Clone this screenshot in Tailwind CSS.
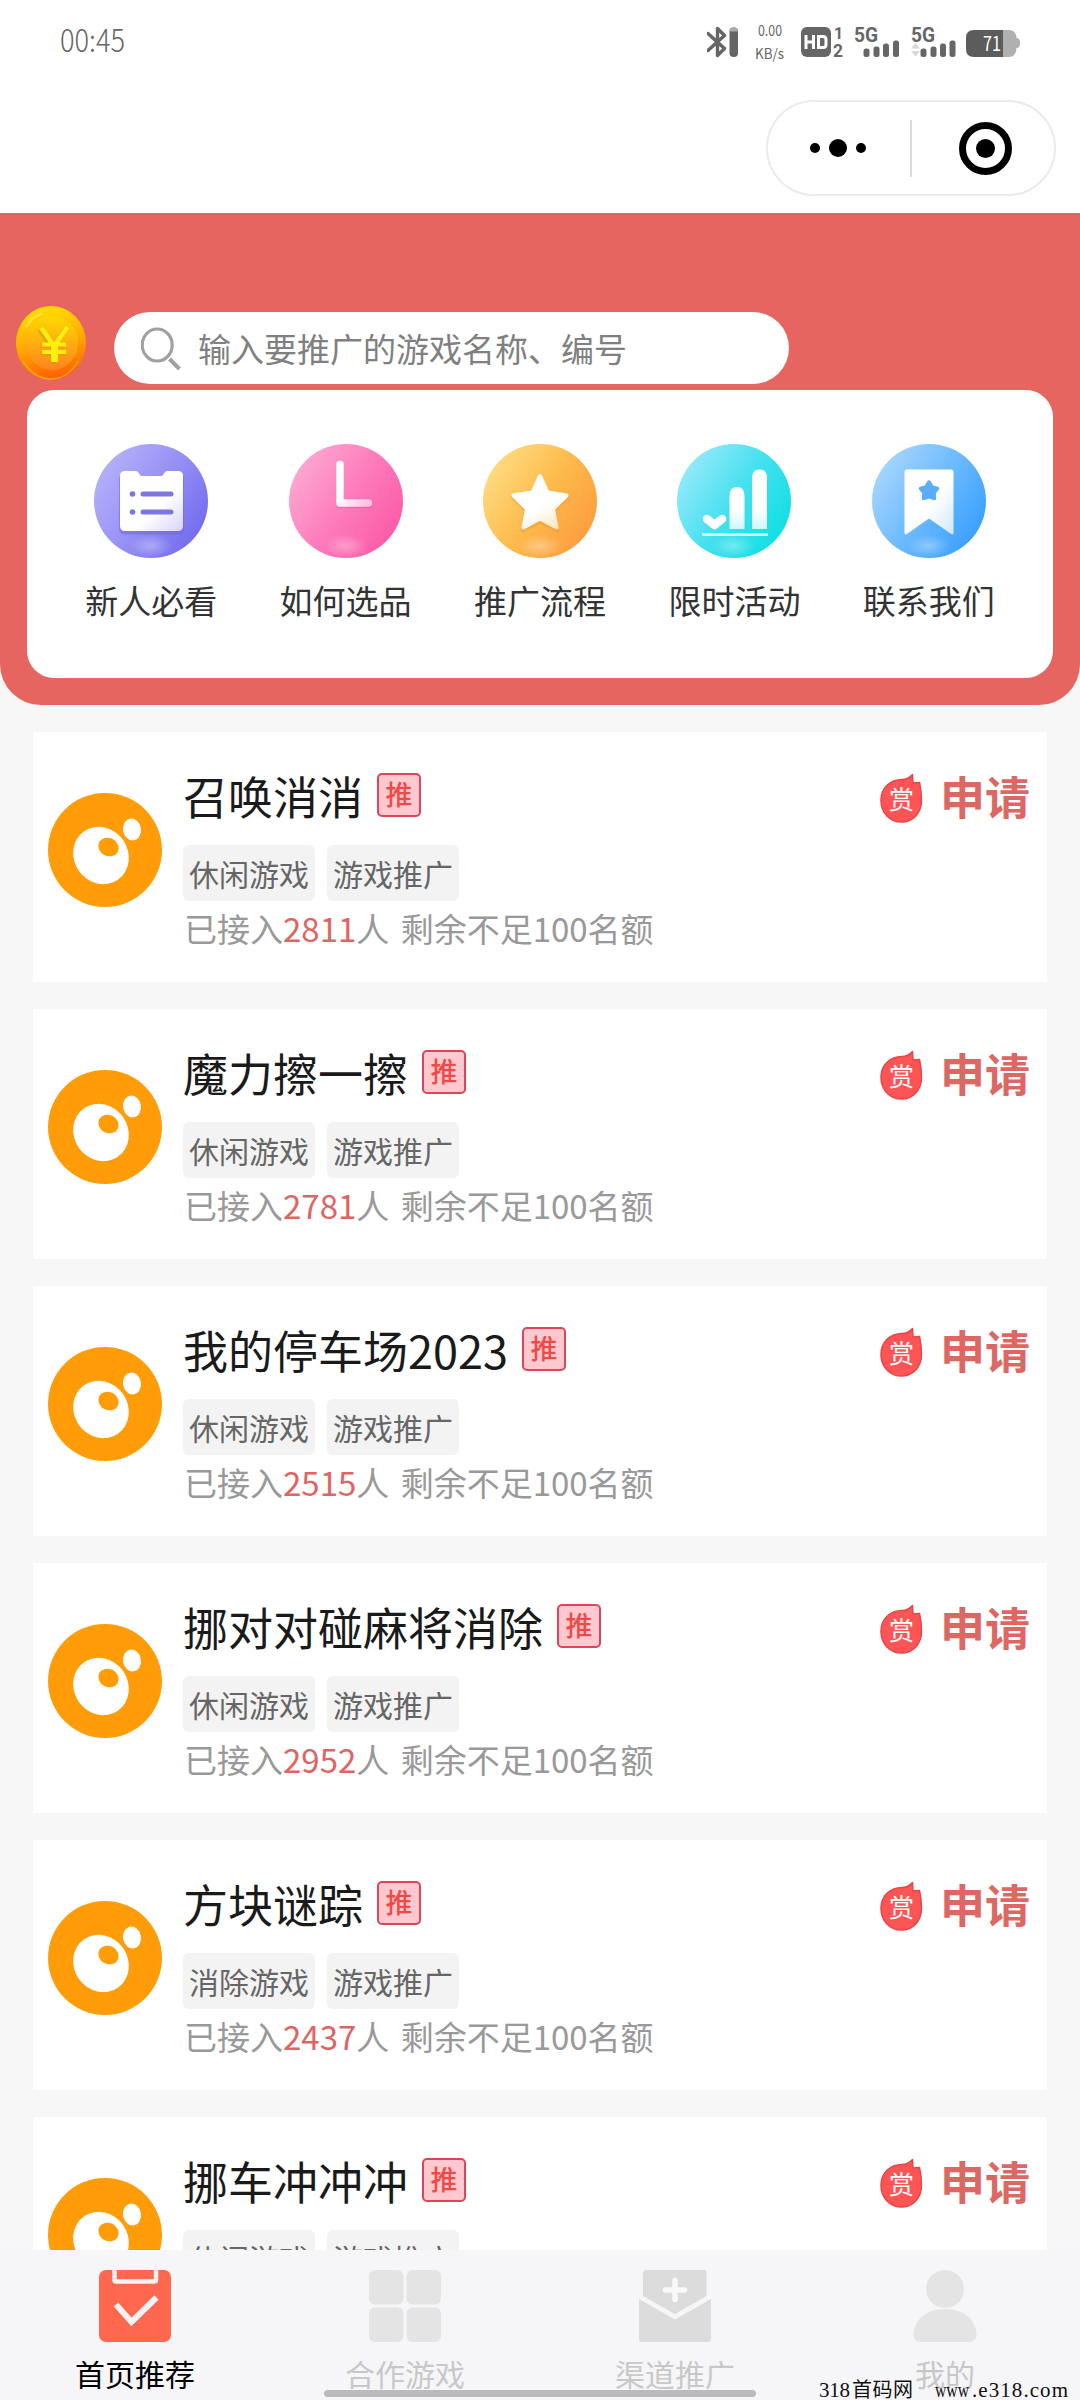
<!DOCTYPE html>
<html lang="zh-CN">
<head>
<meta charset="utf-8">
<title>首页推荐</title>
<script src="https://cdn.jsdelivr.net/npm/@tailwindcss/browser@4"></script>
</head>
<body class="bg-white">
<div class="relative flex h-[2400px] w-[1080px] flex-col overflow-hidden bg-[#f7f7f7] font-['Noto_Sans_CJK_SC','Noto_Sans',sans-serif] font-normal">

  <!-- status bar and capsule -->
  <header class="flex h-[213px] shrink-0 flex-col bg-white">
    <div class="flex h-[82px] items-start pl-[60px] pr-[60px] pt-[20px]">
      <svg width="68" height="44" viewBox="0 -5 68 44"><text x="0" y="26.500" font-size="31" fill="#666" textLength="65" lengthAdjust="spacingAndGlyphs" font-family="'Noto Sans CJK SC',sans-serif" font-weight="300">00:45</text></svg>
      <div class="ml-auto flex items-start">
        <svg width="32" height="44" viewBox="0 -5 32 44"><path d="M1 8.500 17.500 23.500 10.500 30.500V3.500L17.500 10.500 1 25.500" fill="none" stroke="#666" stroke-width="3.400" stroke-linejoin="round" stroke-linecap="round"/><rect x="22.500" y="2.500" width="8.500" height="29.500" rx="4" fill="#666"/><path d="M22.500 6.500a4.200 4.200 0 0 1 8.500 0z" fill="#aaa"/></svg>
        <svg class="ml-[14px]" width="34" height="50" viewBox="0 -5 34 50"><g fill="#666" font-family="'Noto Sans CJK SC',sans-serif"><text x="5" y="11" font-size="15" textLength="24" lengthAdjust="spacingAndGlyphs">0.00</text><text x="2" y="34" font-size="14" textLength="29" lengthAdjust="spacingAndGlyphs">KB/s</text></g></svg>
        <svg class="ml-[14px]" width="44" height="44" viewBox="0 -5 44 44"><rect x="0" y="2" width="30" height="30" rx="6" fill="#666"/><path d="M5 10V24M12.500 10V24M5 17H12.500" stroke="#fff" stroke-width="3" fill="none"/><path d="M17.500 11.500H22Q25 11.500 25 14.500V19.500Q25 22.500 22 22.500H17.500Z" stroke="#fff" stroke-width="3" fill="none"/><g fill="#666" font-weight="700" font-family="Roboto,sans-serif"><text x="33" y="13.500" font-size="16">1</text><text x="32" y="31.500" font-size="17.500">2</text></g></svg>
        <svg class="ml-[9px]" width="46" height="44" viewBox="0 -5 46 44"><text x="0" y="16.500" font-size="20" font-weight="700" fill="#666" textLength="24" lengthAdjust="spacingAndGlyphs" font-family="Roboto,sans-serif">5G</text><g fill="#666"><rect x="9.500" y="23.500" width="6" height="8.500" rx="2.500"/><rect x="19.500" y="21.500" width="6" height="10.500" rx="2.500"/><rect x="29" y="18.500" width="6" height="13.500" rx="2.500"/><rect x="39" y="15.500" width="6" height="16.500" rx="2.500"/></g></svg>
        <svg class="ml-[11px]" width="46" height="44" viewBox="0 -5 46 44"><text x="0" y="16.500" font-size="20" font-weight="700" fill="#666" textLength="24" lengthAdjust="spacingAndGlyphs" font-family="Roboto,sans-serif">5G</text><path d="M0 23.500 4.500 18 9 23.500zM0 26 4.500 31.500 9 26z" fill="#d8d8d8"/><g fill="#666"><rect x="9.500" y="23.500" width="6" height="8.500" rx="2.500"/><rect x="19.500" y="21.500" width="6" height="10.500" rx="2.500"/><rect x="29" y="18.500" width="6" height="13.500" rx="2.500"/><rect x="38.500" y="15.500" width="6" height="16.500" rx="2.500"/></g></svg>
        <svg class="ml-[9px]" width="54" height="44" viewBox="0 -5 54 44"><path d="M37 5h6q7 0 7.500 8q3.500 0 3.500 5t-3.500 5q-.5 9-7.500 9h-6z" fill="#b0b0b0"/><path d="M37 5H8Q0 5 0 13V24Q0 32 8 32H37Z" fill="#5c5c5c"/><text x="17" y="25.500" font-size="20" fill="#fff" textLength="18" lengthAdjust="spacingAndGlyphs" font-family="'Noto Sans CJK SC',sans-serif">71</text></svg>
      </div>
    </div>
    <div class="mt-[18px] flex justify-end pr-[24px]">
      <div class="flex h-[96px] w-[290px] items-center rounded-full border-2 border-[#ebebeb]">
        <div class="flex w-[142px] items-center justify-center gap-[9px] pr-[3px]">
          <i class="size-[10px] rounded-full bg-black"></i><i class="size-[18px] rounded-full bg-black"></i><i class="size-[10px] rounded-full bg-black"></i>
        </div>
        <i class="h-[57px] w-[2px] bg-[#dcdcdc]"></i>
        <div class="flex flex-1 justify-center pl-[5px]">
          <div class="flex size-[53px] items-center justify-center rounded-full border-[7px] border-black"><i class="size-[19px] rounded-full bg-black"></i></div>
        </div>
      </div>
    </div>
  </header>

  <!-- search and shortcuts -->
  <section class="flex h-[492px] shrink-0 flex-col rounded-b-[41px] bg-[#e66560]">
    <div class="flex h-[177px] items-start pl-[16px] pt-[93px]">
      <svg width="70" height="74" viewBox="0 0 70 74">
        <defs><linearGradient id="c1" x1=".4" y1="0" x2=".6" y2="1"><stop offset="0" stop-color="#ffe000"/><stop offset=".5" stop-color="#ffa800"/><stop offset="1" stop-color="#ff5a00"/></linearGradient><linearGradient id="c2" x1="0" y1="0" x2="0" y2="1"><stop offset="0" stop-color="#ffd800"/><stop offset="1" stop-color="#ff8420"/></linearGradient></defs>
        <ellipse cx="35" cy="37" rx="35" ry="37" fill="url(#c1)"/>
        <path d="M7 55Q18 73 35 73T62 55" fill="none" stroke="#ffa51c" stroke-width="1.500"/>
        <ellipse cx="36" cy="37" rx="26" ry="27" fill="url(#c2)"/>
        <path d="M11 20Q16 11 25 8" fill="none" stroke="#ffe040" stroke-width="2.500" stroke-linecap="round"/>
        <path d="M24.500 23 37.500 41 51 22M38 40V57M26 38.500H50M26 46.500H50" fill="none" stroke="#d98a10" stroke-width="4.500" opacity=".5" transform="translate(-1.200 .8)"/>
        <path d="M25.500 22 38 40 51.500 21" fill="none" stroke="#ffee10" stroke-width="4.500"/><path d="M38.500 39V56" stroke="#ffee10" stroke-width="7"/><path d="M26 38.500H50M26 46H50" stroke="#ffee10" stroke-width="4"/>
      </svg>
      <div class="ml-[28px] mt-[6px] flex h-[72px] w-[675px] items-center rounded-full bg-white pl-[27px]">
        <svg width="40" height="44" viewBox="0 0 40 44"><ellipse cx="16.200" cy="19" rx="15" ry="16" fill="none" stroke="#a0a0a0" stroke-width="3.200"/><path d="M28.500 33 38.500 43" stroke="#a0a0a0" stroke-width="4"/></svg>
        <span class="ml-[17px] mt-[-1px] whitespace-nowrap text-[33px] leading-[50px] text-[#808080]">输入要推广的游戏名称、编号</span>
      </div>
    </div>
    <div class="mx-[27px] grid h-[288px] grid-cols-5 rounded-[27px] bg-white px-[27px] pt-[54px] text-[33px] leading-[50px] text-[#333]">
      <div class="flex flex-col items-center">
        <svg width="114" height="114" viewBox="0 0 114 114">
          <defs>
            <radialGradient id="glow"><stop offset="0" stop-color="#fff" stop-opacity=".32"/><stop offset="1" stop-color="#fff" stop-opacity="0"/></radialGradient>
            <linearGradient id="g1" x1=".05" y1=".2" x2=".95" y2=".8"><stop offset="0" stop-color="#b6b0fa"/><stop offset=".5" stop-color="#9790f5"/><stop offset="1" stop-color="#716bee"/></linearGradient>
            <linearGradient id="w1" x1="0" y1="0" x2="1" y2="1"><stop offset=".6" stop-color="#fff"/><stop offset="1" stop-color="#d9d2fb"/></linearGradient>
          </defs>
          <circle cx="57" cy="57" r="57" fill="url(#g1)"/><ellipse cx="57" cy="102" rx="22" ry="11.500" fill="url(#glow)"/>
          <path d="M31 28H42Q44 28 45 30.500T48 33H67Q69 33 70 30.500T73 28H84Q90 28 90 34V83Q90 89 84 89H31Q25 89 25 83V34Q25 28 31 28Z" fill="#6d64dc" opacity=".5" transform="translate(0 1.500)"/>
          <path d="M31 27H42Q44 27 45 29.500T48 32H67Q69 32 70 29.500T73 27H84Q89 27 89 32V82Q89 87 84 87H31Q26 87 26 82V32Q26 27 31 27Z" fill="url(#w1)"/>
          <path d="M49 50H77M49 68H77" stroke="#7d76e0" stroke-width="5" stroke-linecap="round"/><circle cx="38.500" cy="50" r="2.800" fill="#7d76e0"/><circle cx="38.500" cy="68" r="2.800" fill="#7d76e0"/>
        </svg>
        <span class="mt-[17px]">新人必看</span>
      </div>
      <div class="flex flex-col items-center">
        <svg width="114" height="114" viewBox="0 0 114 114">
          <defs><linearGradient id="g2" x1=".05" y1=".2" x2=".95" y2=".8"><stop offset="0" stop-color="#fda9d2"/><stop offset=".5" stop-color="#fd7cbb"/><stop offset="1" stop-color="#fb5aa6"/></linearGradient></defs>
          <circle cx="57" cy="57" r="57" fill="url(#g2)"/><ellipse cx="57" cy="102" rx="22" ry="11.500" fill="url(#glow)"/>
          <path d="M51 22V60H80" fill="none" stroke="#e24d98" stroke-width="8" stroke-linecap="round" stroke-linejoin="round" opacity=".35"/>
          <defs><linearGradient id="w2" gradientUnits="userSpaceOnUse" x1="50" y1="50" x2="84" y2="64"><stop offset="0" stop-color="#fff"/><stop offset="1" stop-color="#feb5d8"/></linearGradient></defs>
          <path d="M51 20.500V59H79.500" fill="none" stroke="url(#w2)" stroke-width="7.500" stroke-linecap="round" stroke-linejoin="round"/>
        </svg>
        <span class="mt-[17px]">如何选品</span>
      </div>
      <div class="flex flex-col items-center">
        <svg width="114" height="114" viewBox="0 0 114 114">
          <defs><linearGradient id="g3" x1=".05" y1=".2" x2=".95" y2=".8"><stop offset="0" stop-color="#fedc83"/><stop offset=".5" stop-color="#fdbb4c"/><stop offset="1" stop-color="#fd9c3f"/></linearGradient><linearGradient id="w3" x1=".2" y1="0" x2=".8" y2="1"><stop offset=".6" stop-color="#fff"/><stop offset="1" stop-color="#ffe6c4"/></linearGradient></defs>
          <circle cx="57" cy="57" r="57" fill="url(#g3)"/><ellipse cx="57" cy="102" rx="22" ry="11.500" fill="url(#glow)"/>
          <path d="M57 32 64 48.500 84.500 51.500 71 65 74 84.500 57 76 40 84.500 43 65 29.500 51.500 50 48.500Z" fill="#ef8f26" stroke="#ef8f26" stroke-width="4" stroke-linejoin="round" opacity=".35" transform="translate(0 1.500)"/>
          <path d="M57 32 64.500 48.500 83.500 51.500 70 65 73.500 83.500 57 74.500 40.500 83.500 44 65 30.500 51.500 49.500 48.500Z" fill="url(#w3)" stroke="url(#w3)" stroke-width="4" stroke-linejoin="round"/>
        </svg>
        <span class="mt-[17px]">推广流程</span>
      </div>
      <div class="flex flex-col items-center">
        <svg width="114" height="114" viewBox="0 0 114 114">
          <defs><linearGradient id="g4" x1=".05" y1=".2" x2=".95" y2=".8"><stop offset="0" stop-color="#98eafa"/><stop offset=".5" stop-color="#45e0ef"/><stop offset="1" stop-color="#0fdfe4"/></linearGradient><linearGradient id="w4" gradientUnits="userSpaceOnUse" x1="0" y1="30" x2="0" y2="88"><stop offset=".6" stop-color="#fff"/><stop offset="1" stop-color="#c8f7fa"/></linearGradient></defs>
          <circle cx="57" cy="57" r="57" fill="url(#g4)"/><ellipse cx="57" cy="102" rx="22" ry="11.500" fill="url(#glow)"/>
          <path d="M52.500 85V52Q52.500 43 60 43T67.500 52V85ZM75 85V34Q75 25.500 82.500 25.500T90 34V85Z" fill="url(#w4)"/>
          <path d="M30 75 37.500 81 45 75" fill="none" stroke="#fff" stroke-width="8.500" stroke-linecap="round" stroke-linejoin="round"/>
          <path d="M25 90.500H91" stroke="#c9f8fb" stroke-width="3"/>
        </svg>
        <span class="mt-[17px]">限时活动</span>
      </div>
      <div class="flex flex-col items-center">
        <svg width="114" height="114" viewBox="0 0 114 114">
          <defs><linearGradient id="g5" x1=".05" y1=".2" x2=".95" y2=".8"><stop offset="0" stop-color="#a8d6fe"/><stop offset=".5" stop-color="#6cbafe"/><stop offset="1" stop-color="#389ffd"/></linearGradient><linearGradient id="w5" x1="0" y1="0" x2="1" y2="1"><stop offset=".55" stop-color="#fff"/><stop offset="1" stop-color="#cfe7ff"/></linearGradient></defs>
          <circle cx="57" cy="57" r="57" fill="url(#g5)"/><ellipse cx="57" cy="102" rx="22" ry="11.500" fill="url(#glow)"/>
          <path d="M35 25.500H79Q81.500 25.500 81.500 28V88.500Q81.500 92 78.500 89.500L57 74.500 35.500 89.500Q32.500 92 32.500 88.500V28Q32.500 25.500 35 25.500Z" fill="url(#w5)"/>
          <path d="M57 38 60 43 65.500 44.500 62 49 62.500 54.500 57 52.500 51.500 54.500 52 49 48.500 44.500 54 43Z" fill="#5aaef8" stroke="#5aaef8" stroke-width="3.500" stroke-linejoin="round"/>
        </svg>
        <span class="mt-[17px]">联系我们</span>
      </div>
    </div>
  </section>

  <!-- game list -->
  <main id="list" class="flex h-[1545px] shrink-0 flex-col gap-[27px] overflow-hidden px-[33px] pt-[27px]"></main>

  <template id="card">
    <article class="flex h-[250px] shrink-0 bg-white pl-[15px] pr-[17px]">
      <svg class="mt-[61px] shrink-0" width="114" height="114" viewBox="0 0 114 114"><circle cx="57" cy="57" r="57" fill="#ff9c08"/><ellipse cx="53" cy="62.500" rx="27" ry="29.500" transform="rotate(-35 53 62.500)" fill="#fff"/><ellipse cx="60.500" cy="54" rx="9" ry="10.500" transform="rotate(-62 60.500 54)" fill="#ff9c08"/><ellipse cx="84" cy="36.500" rx="9" ry="11" transform="rotate(-10 84 36.500)" fill="#fff"/></svg>
      <div class="ml-[21px] flex flex-1 flex-col items-start pt-[39px]">
        <div class="flex h-[50px] items-center">
          <h2 data-title class="whitespace-nowrap text-[45px] leading-[50px] text-[#1a1a1a]"></h2>
          <span class="mb-[3px] ml-[14px] flex size-[44px] items-center justify-center rounded-[5px] border-2 border-[#df4458] bg-[#ffc9cf] pb-[2px] text-[27px] font-medium leading-none text-[#f04a48]">推</span>
        </div>
        <div data-tags class="mt-[24px] flex h-[56px] gap-[12px]"></div>
        <p class="mt-[2px] whitespace-nowrap pl-px text-[33px] leading-[50px] text-[#999]">已接入<b data-count class="font-normal text-[#e06461]"></b>人 <span class="pl-[4px]">剩余不足100名额</span></p>
      </div>
      <div class="mt-[39px] flex h-[50px] items-start">
        <svg class="mt-[2px]" width="44" height="50" viewBox="0 0 44 50"><path d="M33.500 1.500 34 10 40.500 9.500Q42.500 18 42.500 27.500C42.500 40 34 49 22.500 49S2 40 2 27.500C2 15 11 6.500 23 6.500Q29 6.500 33.500 1.500Z" fill="#fd5555" stroke="#e8464b" stroke-width="1.500" stroke-linejoin="round"/><text x="22.500" y="35.500" text-anchor="middle" font-size="25" fill="#fff" font-family="'Noto Sans CJK SC',sans-serif" font-weight="400">赏</text></svg>
        <span class="ml-[17px] text-[45px] font-bold leading-[50px] text-[#dc6763]">申请</span>
      </div>
    </article>
  </template>

  <!-- tab bar -->
  <nav class="grid h-[150px] shrink-0 grid-cols-4 bg-[#f6f6f9] pt-[20px] text-[30px] leading-[44px] text-[#c8c8c8]">
    <div class="flex flex-col items-center">
      <svg width="72" height="72" viewBox="0 0 72 72"><rect width="72" height="72" rx="7" fill="#ff674f"/><path d="M15.500 0V10Q15.500 11.500 17 11.500H55Q57 11.500 57 10V0" fill="none" stroke="#faf2f3" stroke-width="4.500"/><path d="M17 34.500 32.500 52 57.500 27.500" fill="none" stroke="#faf2f3" stroke-width="6"/></svg>
      <span class="mt-[9px] text-black">首页推荐</span>
    </div>
    <div class="flex flex-col items-center">
      <svg width="72" height="72" viewBox="0 0 72 72" fill="#e4e4e4"><rect width="34.500" height="34.500" rx="6"/><rect x="37.500" width="34.500" height="34.500" rx="6"/><rect y="37.500" width="34.500" height="34.500" rx="6"/><rect x="37.500" y="37.500" width="34.500" height="34.500" rx="6"/></svg>
      <span class="mt-[9px]">合作游戏</span>
    </div>
    <div class="flex flex-col items-center">
      <svg width="72" height="72" viewBox="0 0 72 72" fill="#dcdcdc"><path d="M7 0H65Q67.500 0 67.500 3V26L36 44 4 26V3Q4 0 7 0Z"/><path d="M0 29 36 49.500 72 29V69Q72 72 69 72H3Q0 72 0 69Z"/><path d="M36 10.500V29.500M26.500 20H45.500" stroke="#f9f9fa" stroke-width="5.500" stroke-linecap="round"/></svg>
      <span class="mt-[9px]">渠道推广</span>
    </div>
    <div class="flex flex-col items-center">
      <svg width="72" height="72" viewBox="0 0 72 72" fill="#e4e4e4"><circle cx="36" cy="19" r="19"/><path d="M36 39C57 39 67.500 52 67.500 65Q67.500 72 60 72H12Q4.500 72 4.500 65C4.500 52 15 39 36 39Z"/></svg>
      <span class="mt-[9px]">我的</span>
    </div>
  </nav>

  <!-- gesture bar and site mark lie over the tab bar -->
  <i class="absolute left-[324px] top-[2390px] h-[7px] w-[432px] rounded-full bg-[#bbbbbe]"></i>
  <svg class="absolute left-[818px] top-[2370px]" width="256" height="30" viewBox="0 -4 256 30"><g fill="#111" font-family="'Liberation Serif','Noto Sans CJK SC',serif" font-size="21"><text x="1" y="22.500" textLength="31" lengthAdjust="spacing">318</text><text x="34" y="23" font-size="20" textLength="61" font-family="'Noto Sans CJK SC',sans-serif" font-weight="400">首码网</text><text x="117" y="22.500" textLength="34" lengthAdjust="spacingAndGlyphs">www</text><text x="154" y="22.500" textLength="96" lengthAdjust="spacing">.e318.com</text></g></svg>
</div>

<script>
  const games = [
    ['召唤消消', '休闲游戏', 2811],
    ['魔力擦一擦', '休闲游戏', 2781],
    ['我的停车场2023', '休闲游戏', 2515],
    ['挪对对碰麻将消除', '休闲游戏', 2952],
    ['方块谜踪', '消除游戏', 2437],
    ['挪车冲冲冲', '休闲游戏', ''],
  ];
  const tpl = document.getElementById('card');
  for (const [title, kind, count] of games) {
    const card = tpl.content.cloneNode(true);
    card.querySelector('[data-title]').textContent = title;
    card.querySelector('[data-count]').textContent = count;
    if (count === '') card.querySelector('p').remove();
    for (const t of [kind, '游戏推广']) {
      const s = document.createElement('span');
      s.className = 'flex w-[132px] items-center justify-center rounded-[6px] bg-[#f3f3f3] pb-[1px] text-[30px] leading-[44px] text-[#666]';
      s.textContent = t;
      card.querySelector('[data-tags]').append(s);
    }
    document.getElementById('list').append(card);
  }
</script>
</body>
</html>
